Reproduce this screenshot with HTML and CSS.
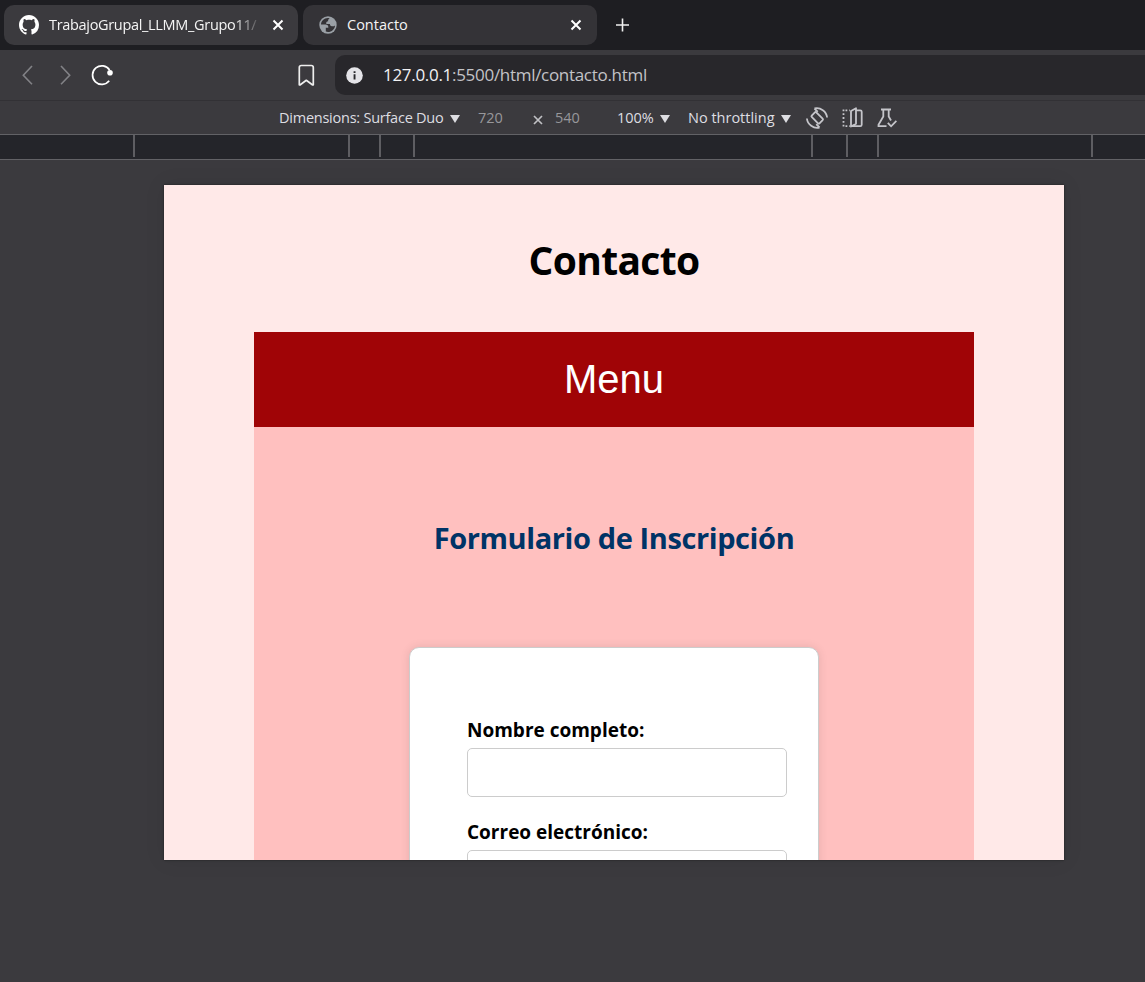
FILE: index.html
```html
<!DOCTYPE html>
<html lang="es">
<head>
<meta charset="utf-8">
<title>Contacto</title>
<link rel="stylesheet" href="styles.css">
</head>
<body>
<header class="tabs">
  <div class="tab tab-active">
    <svg class="github" width="20" height="20" viewBox="0 0 16 16"><path fill="#fff" d="M8 0C3.58 0 0 3.58 0 8c0 3.54 2.29 6.53 5.47 7.59.4.07.55-.17.55-.38 0-.19-.01-.82-.01-1.49-2.01.37-2.53-.49-2.69-.94-.09-.23-.48-.94-.82-1.13-.28-.15-.68-.52-.01-.53.63-.01 1.08.58 1.23.82.72 1.21 1.87.87 2.33.66.07-.52.28-.87.51-1.07-1.78-.2-3.64-.89-3.64-3.95 0-.87.31-1.59.82-2.15-.08-.2-.36-1.02.08-2.12 0 0 .67-.21 2.2.82.64-.18 1.32-.27 2-.27s1.36.09 2 .27c1.53-1.04 2.2-.82 2.2-.82.44 1.1.16 1.92.08 2.12.51.56.82 1.27.82 2.15 0 3.07-1.87 3.75-3.65 3.95.29.25.54.73.54 1.48 0 1.07-.01 1.93-.01 2.2 0 .21.15.46.55.38A8.01 8.01 0 0 0 16 8c0-4.42-3.58-8-8-8z"/></svg>
    <span class="tab-title fade">TrabajoGrupal_LLMM_Grupo11/</span>
    <svg class="close" width="12" height="12" viewBox="0 0 12 12"><path d="M1.500 1.500l9 9M10.500 1.500l-9 9" stroke="#fff" stroke-width="2"/></svg>
  </div>
  <div class="tab">
    <svg class="globe" width="18" height="18" viewBox="0 0 18 18"><circle cx="9" cy="9" r="8.700" fill="#9aa0a6"/><path fill="#343337" d="M9.600 2C5.500 1.600 2 4.700 2 8.600h4.600c1.700 0 2.700.9 2.700 2.300v.8H6.800v3.900C11.500 17 16 13.600 16 9.400c-1 .9-2.200 1-3.200.8-1.300-.2-1.900-1.100-1.900-2.300H7.400c-.5-1.500.1-2.700 1.700-2.700 0-1.300.2-2.200 1.600-2.400z"/></svg>
    <span class="tab-title">Contacto</span>
    <svg class="close" width="12" height="12" viewBox="0 0 12 12"><path d="M1.500 1.500l9 9M10.500 1.500l-9 9" stroke="#fff" stroke-width="2"/></svg>
  </div>
  <svg class="new-tab" width="14" height="14" viewBox="0 0 14 14"><path d="M6.500 .5v13M0 7h13" stroke="#f0f0f0" stroke-width="1.600"/></svg>
</header>

<nav class="toolbar">
  <svg class="back" width="12" height="20" viewBox="0 0 12 20"><path d="M11 1L2.300 10.300l8.700 9" fill="none" stroke="#828286" stroke-width="1.600"/></svg>
  <svg class="forward" width="12" height="20" viewBox="0 0 12 20"><path d="M2 1l8.700 9.300L2 19.300" fill="none" stroke="#828286" stroke-width="1.600"/></svg>
  <svg class="reload" width="22" height="22" viewBox="0 0 22 22"><path d="M18.600 6A9.300 9.300 0 1 0 18.200 16.800" fill="none" stroke="#fff" stroke-width="1.700"/><circle cx="19" cy="8.800" r="2.800" fill="#fff"/></svg>
  <svg class="bookmark" width="18" height="22" viewBox="0 0 18 22"><path d="M2.300 3.500q0-2 2-2h10q2 0 2 2v17.300h-1l-6-4.500-6 4.500h-1z" fill="none" stroke="#eee" stroke-width="1.700" stroke-linejoin="round"/></svg>
  <div class="address">
    <svg class="info" width="17" height="17" viewBox="0 0 17 17"><circle cx="8.500" cy="8.500" r="8.300" fill="#e4e4e8"/><path d="M7.600 4.200h1.900v1.900H7.600zM7.600 7.300h1.900v5.300H7.600z" fill="#28282c"/></svg>
    <span class="url"><span class="host">127.0.0.1</span>:5500/html/contacto.html</span>
  </div>
</nav>

<div class="device-bar">
  <span class="d-label d-device">Dimensions: Surface Duo</span>
  <i class="arrow"></i>
  <span class="d-label dim d-w">720</span>
  <svg class="times" width="10" height="10" viewBox="0 0 10 10"><path d="M1 1l8 8M9 1L1 9" stroke="#c0c0c4" stroke-width="1.700"/></svg>
  <span class="d-label dim d-h">540</span>
  <span class="d-label d-zoom">100%</span>
  <i class="arrow"></i>
  <span class="d-label d-throttle">No throttling</span>
  <i class="arrow"></i>
  <svg class="rotate" width="22" height="22" viewBox="0 0 22 22" fill="none" stroke="#c5c5ca" stroke-width="1.800"><rect x="8" y="5.500" width="6.500" height="11" rx="1" transform="rotate(-45 11 11)"/><path d="M8.500 1.500c6-1.400 12 3 12.600 9M8.500 1.500l3.200 3.300M13.500 20.500c-6 1.400-12-3-12.600-9M13.500 20.500l-3.200-3.300"/></svg>
  <svg class="posture" width="21" height="22" viewBox="0 0 21 22" fill="none" stroke="#c5c5ca" stroke-width="1.800"><path d="M1.500 2.500v17.500M3.500 3.300h4.500M3.500 19.200h4.500" stroke-dasharray="1.800 2"/><path d="M9 4l5-2.700v15.500L9 19.500zM14 3.300h4.200q1.500 0 1.500 1.500v12.900q0 1.500-1.500 1.500H9" stroke-linejoin="round"/></svg>
  <svg class="flask" width="20" height="20" viewBox="0 0 20 20" fill="none" stroke="#c5c5ca" stroke-width="1.800"><path d="M4 1.500h10M6.300 1.500v7L1.500 16.800v1.300H9.500M11.700 1.500v7l2.300 4M10.800 14.800l3.300 3.500 5.300-5.500"/></svg>
</div>

<div class="ruler">
  <i></i><i class="m214"></i><i class="m30"></i><i class="m33"></i><i class="m397"></i><i class="m34"></i><i class="m30"></i><i class="m213"></i>
</div>

<main class="viewport">
  <h1>Contacto</h1>
  <section class="content">
    <div class="menu">Menu</div>
    <h2>Formulario de Inscripción</h2>
    <form class="card">
      <label for="nombre">Nombre completo:</label>
      <input id="nombre" type="text">
      <label for="correo">Correo electrónico:</label>
      <input id="correo" type="email">
    </form>
  </section>
</main>
</body>
</html>
```
FILE: styles.css
```css
* { box-sizing: border-box; }
body {
  margin: 0;
  height: 982px;
  overflow: hidden;
  background: #3b3a3e;
  font-family: "Open Sans", "Noto Sans", sans-serif;
}
svg, i { display: block; flex: none; }

.tabs { display: flex; align-items: center; height: 50px; padding-left: 4px; background: #1e1e22; }
.tab { display: flex; align-items: center; width: 294px; height: 40px; margin-right: 5px; padding-left: 15px; border-radius: 10px; background: #343337; }
.tab-active { background: #3b3a3e; }
.tab-title { width: 211px; margin-left: 10px; white-space: nowrap; font-size: 14.500px; line-height: 20px; color: #f5f5f5; }
.fade { letter-spacing: -.32px; -webkit-mask-image: linear-gradient(90deg, #000 185px, transparent 213px); mask-image: linear-gradient(90deg, #000 185px, transparent 213px); }
.close { margin-left: 12px; }
.globe { margin-left: 1px; }
.new-tab { margin-left: 14px; }

.toolbar { display: flex; align-items: center; height: 51px; padding-left: 21px; border-bottom: 1px solid #323135; background: #3b3a3e; }
.forward { margin-left: 26px; }
.reload { margin-left: 20px; }
.bookmark { margin-left: 184px; }
.address { display: flex; align-items: center; flex: 1; height: 40px; margin-left: 20px; padding-left: 11px; border-radius: 10px 0 0 10px; background: #28272b; }
.url { margin-left: 20px; font-size: 17px; line-height: 24px; letter-spacing: -.3px; color: #c3c3c7; white-space: nowrap; }
.host { color: #f2f2f4; }

.device-bar { display: flex; align-items: center; height: 33px; padding-left: 279px; font-size: 14.500px; line-height: 20px; color: #dedee2; }
.d-label { flex: none; white-space: nowrap; }
.d-device { width: 171px; letter-spacing: -.24px; }
.dim { color: #97979b; }
.arrow { width: 0; height: 0; margin-top: 3px; border: 5px solid transparent; border-top: 8px solid #dedee2; border-bottom: 0; }
.d-w { width: 55px; margin-left: 18px; }
.times { margin-top: 5px; }
.d-h { width: 62px; margin-left: 12px; }
.d-zoom { width: 43px; }
.d-throttle { width: 93px; margin-left: 18px; }
.rotate { margin-left: 15px; }
.posture { margin-left: 14px; }
.flask { margin-left: 14px; }

.ruler { display: flex; height: 26px; padding-left: 133px; border-top: 1px solid #626266; border-bottom: 1px solid #626266; background: #24252a; }
.ruler i { width: 2px; height: 22px; background: #5e5e62; }
.ruler .m214 { margin-left: 213px; }
.ruler .m30 { margin-left: 29px; }
.ruler .m33 { margin-left: 32px; }
.ruler .m397 { margin-left: 396px; }
.ruler .m34 { margin-left: 33px; }
.ruler .m213 { margin-left: 212px; }

.viewport { width: 900px; height: 675px; margin: 25px 0 0 164px; overflow: hidden; background: #ffe9e8; box-shadow: 0 0 2px rgba(0, 0, 0, .5), 0 0 20px rgba(0, 0, 0, .08); }
h1 { height: 147px; margin: 0; padding-top: 47px; text-align: center; font-size: 39px; line-height: 56px; letter-spacing: -.65px; color: #000; }
.content { width: 720px; height: 600px; margin: 0 auto; overflow: hidden; background: #ffc0bf; }
.menu { height: 95px; background: #a00406; color: #fff; text-align: center; font: 40px/95px "Liberation Sans", Arial, sans-serif; }
h2 { height: 40px; margin: 91px 0 0; text-align: center; font-size: 29px; line-height: 40px; letter-spacing: -.4px; color: #003366; }
.card { width: 410px; height: 500px; margin: 89px auto 0; padding: 68px 31px 0 57px; border: 1px solid #ccc; border-radius: 10px; background: #fff; box-shadow: 0 0 10px rgba(0, 0, 0, .1); }
label { display: block; height: 32px; font-size: 19px; font-weight: 700; line-height: 28px; color: #000; }
input { display: block; width: 320px; height: 49px; margin: 0 0 21px; border: 1px solid #ccc; border-radius: 5px; background: #fff; }
```
